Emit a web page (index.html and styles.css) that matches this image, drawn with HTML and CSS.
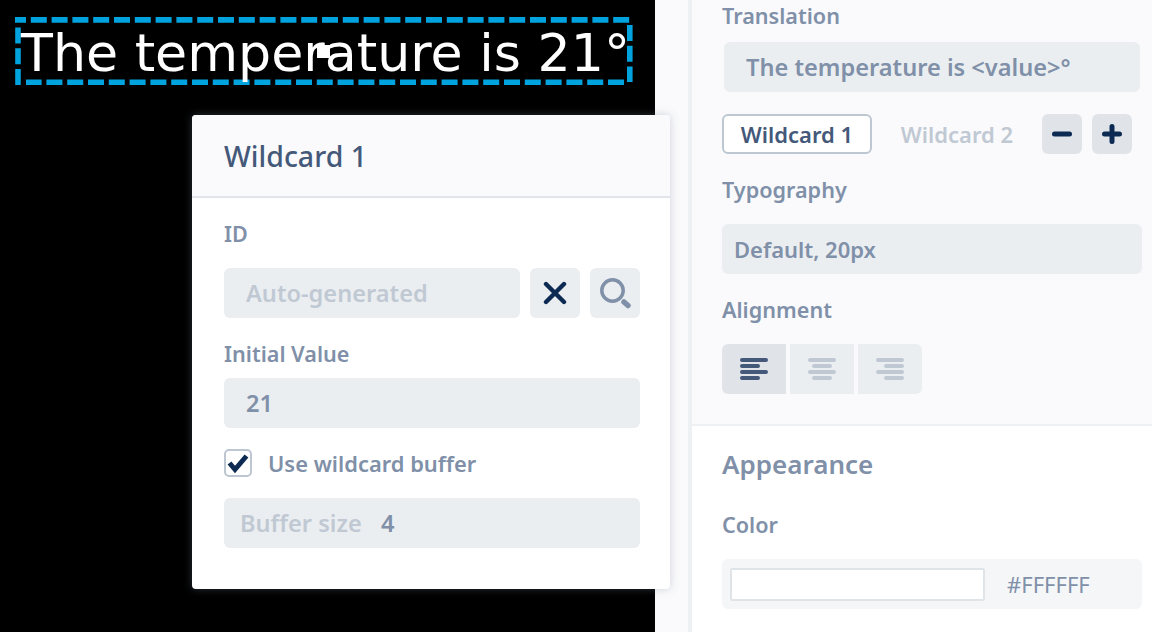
FILE: index.html
```html
<!DOCTYPE html>
<html lang="en">
<head>
    <meta charset="UTF-8">
    <meta name="viewport" content="width=device-width, initial-scale=1.0">
    <title>Wildcard editor</title>
    <link rel="stylesheet" href="styles.css">
</head>
<body>

<div class="canvas">
    <div class="widget">
        <svg class="widget-outline" width="620" height="68" viewBox="0 0 620 68">
            <path d="M-5 2.85H615M614.8 8V65M609 65.25H11M3 68V10" />
        </svg>
        <span class="widget-text">The temperature is 21°</span>
        <span class="widget-handle"></span>
    </div>
</div>

<div class="popover">
    <div class="popover-header">Wildcard 1</div>
    <div class="popover-body">
        <div class="label label-id">ID</div>
        <div class="id-row">
            <div class="field field-grow muted indent">Auto-generated</div>
            <button class="icon-btn">
                <svg width="24" height="24" viewBox="0 0 24 24"><path class="ico-dark" d="M3 3L21 21M21 3L3 21" /></svg>
            </button>
            <button class="icon-btn">
                <svg width="50" height="50" viewBox="0 0 50 50">
                    <circle class="ico-grey" cx="22.5" cy="22.5" r="10.7" />
                    <path class="ico-grey-thick" d="M34 34L38 37.5" />
                </svg>
            </button>
        </div>
        <div class="label label-value">Initial Value</div>
        <div class="field indent">21</div>
        <div class="check-row">
            <span class="checkbox">
                <svg width="24" height="24" viewBox="0 0 24 24"><path class="ico-check" d="M3.5 12L9 18.5L20.5 5" /></svg>
            </span>
            <span class="check-label">Use wildcard buffer</span>
        </div>
        <div class="field buffer">
            <span class="muted">Buffer size</span>
            <span class="buffer-value">4</span>
        </div>
    </div>
</div>

<div class="panel">
    <div class="section section-text">
        <div class="label">Translation</div>
        <div class="field translation indent">The temperature is &lt;value&gt;°</div>
        <div class="tabs">
            <div class="tab active">Wildcard 1</div>
            <div class="tab">Wildcard 2</div>
            <button class="tab-btn">
                <svg width="24" height="24" viewBox="0 0 24 24"><path class="ico-bold" d="M4.5 12H19.5" /></svg>
            </button>
            <button class="tab-btn">
                <svg width="24" height="24" viewBox="0 0 24 24"><path class="ico-bold" d="M4.5 12H19.5M12 4.5V19.5" /></svg>
            </button>
        </div>
        <div class="label label-spaced">Typography</div>
        <div class="field select">Default, 20px</div>
        <div class="label label-spaced">Alignment</div>
        <div class="align-group">
            <div class="align-btn selected">
                <span class="bars"><i class="long"></i><i class="short"></i><i class="long"></i><i class="short"></i></span>
            </div>
            <div class="align-btn">
                <span class="bars center"><i class="long"></i><i class="short"></i><i class="long"></i><i class="short"></i></span>
            </div>
            <div class="align-btn">
                <span class="bars right"><i class="long"></i><i class="short"></i><i class="long"></i><i class="short"></i></span>
            </div>
        </div>
    </div>
    <div class="section section-look">
        <div class="heading">Appearance</div>
        <div class="label label-color">Color</div>
        <div class="color-box">
            <div class="swatch"></div>
            <div class="hex">#FFFFFF</div>
        </div>
    </div>
</div>

</body>
</html>
```

FILE: styles.css
```css
* {
    box-sizing: border-box;
}
html, body {
    margin: 0;
    height: 632px;
    overflow: hidden;
}
body {
    display: flex;
    position: relative;
    background-color: #fafafc;
    font-family: "Noto Sans", sans-serif;
    font-weight: 600;
    font-size: 23.6px;
    color: #7f90a8;
}
svg {
    display: block;
}

/* canvas */
.canvas {
    position: relative;
    width: 655px;
    height: 632px;
    background-color: #000;
    flex: none;
}
.widget {
    position: absolute;
    left: 15px;
    top: 17px;
    width: 620px;
    height: 68px;
}
.widget-outline {
    position: absolute;
    left: 0;
    top: 0;
}
.widget-outline path {
    fill: none;
    stroke: #00a3de;
    stroke-width: 5.6;
    stroke-dasharray: 16 4.8;
}
.widget-text {
    position: absolute;
    left: 6px;
    top: 4px;
    font-family: "DejaVu Sans", sans-serif;
    font-weight: 400;
    font-size: 52.2px;
    line-height: 64px;
    color: #fff;
    white-space: nowrap;
}
.widget-handle {
    position: absolute;
    left: 302px;
    top: 28px;
    width: 13px;
    height: 13px;
    background-color: #fff;
}

/* popover */
.popover {
    position: absolute;
    left: 192px;
    top: 115px;
    width: 478px;
    height: 474px;
    background-color: #fff;
    border-radius: 4px;
    box-shadow: 0 0 8px rgba(120, 135, 155, 0.35);
    overflow: hidden;
    z-index: 2;
}
.popover-header {
    height: 83px;
    padding: 19px 32px 0;
    background-color: #fafafc;
    border-bottom: 2px solid #e1e5ea;
    font-size: 28.5px;
    font-weight: 500;
    line-height: 44px;
    color: #44597a;
}
.popover-body {
    padding: 22px 30px 0 32px;
}

/* shared form bits */
.label {
    height: 28px;
    font-size: 21.6px;
    line-height: 28px;
}
.label-id {
    margin-bottom: 20px;
}
.label-value {
    margin: 22px 0 10px;
}
.label-spaced {
    margin: 22px 0 20px;
}
.field {
    height: 50px;
    border-radius: 6px;
    background-color: #ebeef1;
    line-height: 50px;
    white-space: nowrap;
}
.indent {
    padding-left: 22px;
}
.muted {
    color: #c0c9d3;
}

.id-row {
    display: flex;
    gap: 10px;
}
.field-grow {
    flex: 1;
}
.icon-btn {
    display: flex;
    align-items: center;
    justify-content: center;
    width: 50px;
    height: 50px;
    padding: 0;
    border: none;
    border-radius: 6px;
    background-color: #ebeef1;
}
.ico-dark {
    fill: none;
    stroke: #0d2a52;
    stroke-width: 4.4;
    stroke-linecap: round;
}
.ico-bold {
    fill: none;
    stroke: #0d2a52;
    stroke-width: 5;
    stroke-linecap: round;
}
.ico-grey {
    fill: none;
    stroke: #7f90a8;
    stroke-width: 3.5;
}
.ico-grey-thick {
    fill: none;
    stroke: #7f90a8;
    stroke-width: 5.5;
    stroke-linecap: round;
}
.ico-check {
    fill: none;
    stroke: #0d2a52;
    stroke-width: 5;
}

.check-row {
    display: flex;
    align-items: center;
    gap: 16px;
    height: 28px;
    margin: 21px 0;
    font-size: 21.9px;
}
.checkbox {
    display: flex;
    align-items: center;
    justify-content: center;
    width: 28px;
    height: 28px;
    border: 2px solid #bdc7d2;
    border-radius: 5px;
}
.buffer {
    padding-left: 16px;
}
.buffer-value {
    margin-left: 13px;
}

/* right panel */
.panel {
    width: 464px;
    height: 632px;
    margin-left: 33px;
    border-left: 4px solid #eef1f4;
    flex: none;
}
.section {
    padding-left: 30px;
    padding-right: 10px;
}
.section-text {
    height: 426px;
    padding-top: 2px;
    border-bottom: 2px solid #eef1f4;
}
.section-look {
    height: 206px;
    padding-top: 20px;
    background-color: #fff;
}
.translation {
    width: 416px;
    margin: 12px 0 22px 2px;
}
.tabs {
    display: flex;
    align-items: center;
    gap: 10px;
    height: 40px;
}
.tab {
    width: 150px;
    height: 40px;
    border: 2px solid transparent;
    border-radius: 6px;
    font-size: 22px;
    text-align: center;
    line-height: 37px;
    color: #c0c9d3;
}
.tab.active {
    border-color: #bdc7d2;
    background-color: #fff;
    color: #44597a;
}
.tab-btn {
    display: flex;
    align-items: center;
    justify-content: center;
    width: 40px;
    height: 40px;
    padding: 0;
    border: none;
    border-radius: 6px;
    background-color: #e0e4e9;
}
.select {
    padding-left: 12px;
    font-size: 22px;
}
.align-group {
    display: flex;
    gap: 4px;
}
.align-btn {
    display: flex;
    align-items: center;
    justify-content: center;
    width: 64px;
    height: 50px;
    background-color: #ebeef1;
}
.align-btn:first-child {
    border-radius: 6px 0 0 6px;
}
.align-btn:last-child {
    border-radius: 0 6px 6px 0;
}
.align-btn.selected {
    background-color: #e0e4e9;
}
.bars {
    display: flex;
    flex-direction: column;
    align-items: flex-start;
    gap: 2px;
    width: 28px;
}
.bars.center {
    align-items: center;
}
.bars.right {
    align-items: flex-end;
}
.bars i {
    display: block;
    height: 4px;
    border-radius: 2px;
    background-color: #c0c9d3;
}
.selected .bars i {
    background-color: #44597a;
}
.bars .long {
    width: 28px;
}
.bars .short {
    width: 20px;
}
.heading {
    height: 36px;
    font-size: 26px;
    line-height: 36px;
}
.label-color {
    margin: 29px 0 20px;
}
.color-box {
    display: flex;
    align-items: center;
    height: 50px;
    padding-left: 8px;
    border-radius: 6px;
    background-color: #f5f6f8;
}
.swatch {
    width: 255px;
    height: 33px;
    border: 2px solid #dfe4e9;
    border-radius: 2px;
    background-color: #fff;
}
.hex {
    margin-left: 22px;
    font-size: 22px;
    font-weight: 400;
}
```
